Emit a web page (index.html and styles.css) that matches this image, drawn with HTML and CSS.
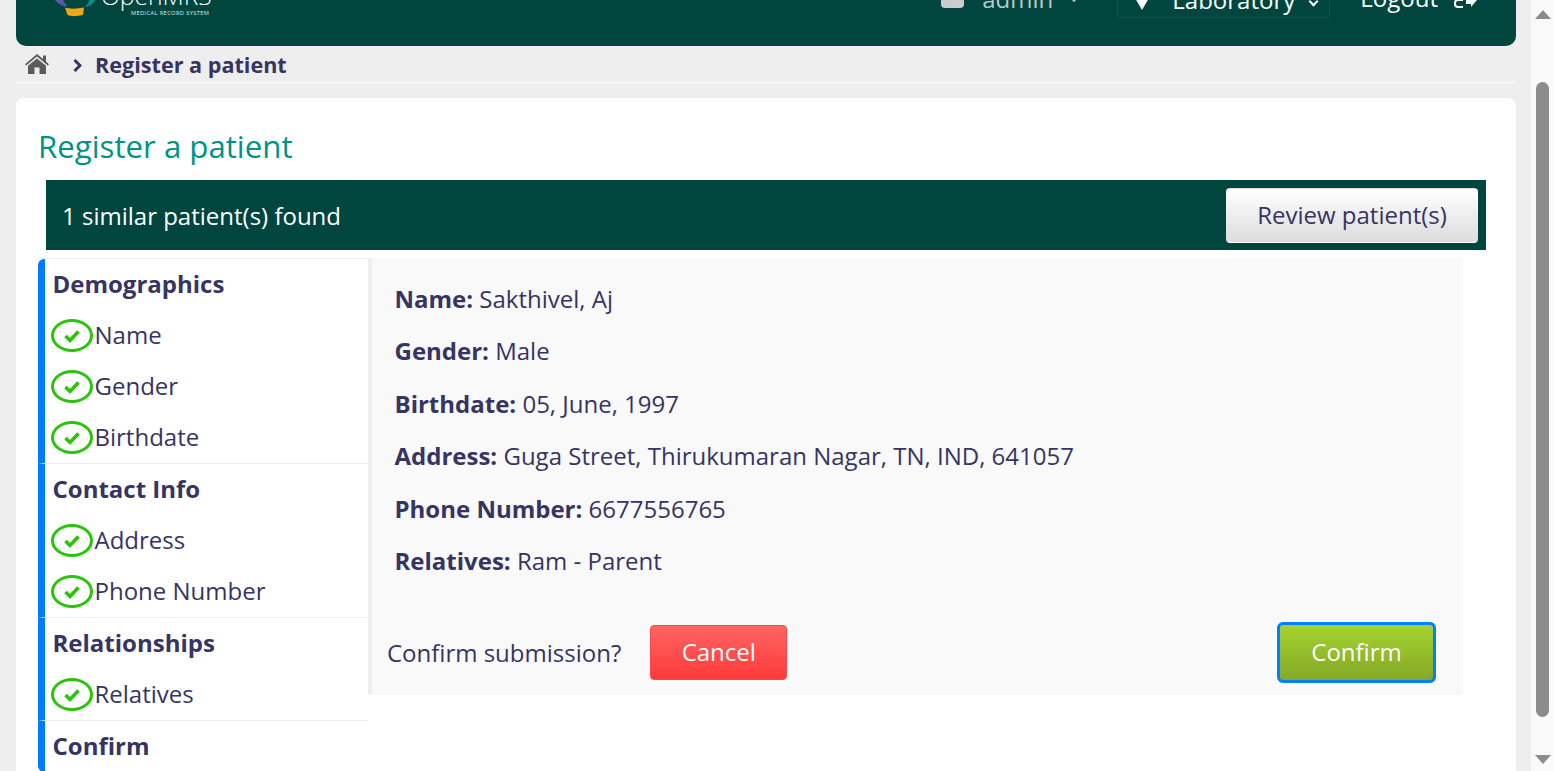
FILE: index.html
```html
<!DOCTYPE html>
<html lang="en">
<head>
<meta charset="utf-8">
<title>Register a patient</title>
<link rel="stylesheet" href="styles.css">
</head>
<body>
<svg class="defs" width="0" height="0" aria-hidden="true">
  <symbol id="ok" viewBox="0 0 42 33">
    <ellipse cx="21" cy="16.5" rx="19.5" ry="15" fill="none" stroke="#2ac40c" stroke-width="3"/>
    <path d="M14.5 17 L19 21.5 L27.5 12.5" fill="none" stroke="#2ac40c" stroke-width="3.6"/>
  </symbol>
</svg>
<div class="page">
  <div class="main">
    <header class="topbar">
      <div class="brand">
        <svg class="logo" viewBox="0 0 40 17" width="40" height="17" aria-hidden="true">
          <path d="M0 0 H8 C9 2 10 4 12 5 L10 6.5 C5 5 2 3 0 0Z" fill="#5b57a6"/>
          <path d="M10 7.5 C14 9 22 9 29 7.5 L28 15 C22 16.5 16 16.5 12.5 15Z" fill="#eea616"/>
          <path d="M30 6.5 C33 4 34 2 34 0 H40 C39 3 36 6 30 7Z" fill="#009384"/>
        </svg>
        <div class="wordmark">
          <span class="brand-name">OpenMRS</span>
          <span class="brand-sub">MEDICAL RECORD SYSTEM</span>
        </div>
      </div>
      <nav class="usernav">
        <span class="nav-user">
          <span class="user-icon"></span>
          <span class="nav-label">admin</span>
          <span class="caret caret-dim"></span>
        </span>
        <span class="nav-location">
          <svg class="pin" viewBox="0 0 14 12" width="14" height="12" aria-hidden="true"><path d="M0 0 H14 L7 12Z" fill="#fff"/></svg>
          <span class="nav-label">Laboratory</span>
          <span class="caret"></span>
        </span>
        <span class="nav-logout">
          <span class="nav-label">Logout</span>
          <svg class="logout-icon" viewBox="0 0 24 12" width="24" height="12" aria-hidden="true"><path d="M9 0 H4 Q1 0 1 3 V4 Q1 7 4 7 H9" fill="none" stroke="#fff" stroke-width="2"/><path d="M13 0 H17 H23 L17 7 V4 H12 V0Z" fill="#fff"/></svg>
        </span>
      </nav>
    </header>
    <div class="crumbs">
      <svg class="home" viewBox="0 0 24 20" width="24" height="20" aria-hidden="true"><path d="M12 0 L18 5 V1.5 H21 V7.6 L24 10.2 L22.8 11.6 L12 2.6 L1.2 11.6 L0 10.2Z M12 4.4 L21 11.8 V20 H14.5 V13.5 H9.5 V20 H3 V11.8Z" fill="#5b5b5b"/></svg>
      <svg class="chev" viewBox="0 0 9 13" width="9" height="13" aria-hidden="true"><path d="M1.5 1 L7 6.5 L1.5 12" fill="none" stroke="#363463" stroke-width="3"/></svg>
      <span class="crumb-text">Register a patient</span>
    </div>
    <section class="card">
      <h1 class="title">Register a patient</h1>
      <div class="similar">
        <span>1 similar patient(s) found</span>
        <button class="btn btn-review" type="button">Review patient(s)</button>
      </div>
      <div class="form">
        <ul class="steps">
          <li class="section">
            <div class="sec-title">Demographics</div>
            <div class="step"><svg class="ok"><use href="#ok"/></svg>Name</div>
            <div class="step"><svg class="ok"><use href="#ok"/></svg>Gender</div>
            <div class="step"><svg class="ok"><use href="#ok"/></svg>Birthdate</div>
          </li>
          <li class="section">
            <div class="sec-title">Contact Info</div>
            <div class="step"><svg class="ok"><use href="#ok"/></svg>Address</div>
            <div class="step"><svg class="ok"><use href="#ok"/></svg>Phone Number</div>
          </li>
          <li class="section">
            <div class="sec-title">Relationships</div>
            <div class="step"><svg class="ok"><use href="#ok"/></svg>Relatives</div>
          </li>
          <li class="section section-last">
            <div class="sec-title">Confirm</div>
          </li>
        </ul>
        <div class="panel">
          <div class="summary">
            <p class="line"><b>Name:</b> Sakthivel, Aj</p>
            <p class="line"><b>Gender:</b> Male</p>
            <p class="line"><b>Birthdate:</b> 05, June, 1997</p>
            <p class="line"><b>Address:</b> Guga Street, Thirukumaran Nagar, TN, IND, 641057</p>
            <p class="line"><b>Phone Number:</b> 6677556765</p>
            <p class="line"><b>Relatives:</b> Ram - Parent</p>
          </div>
          <div class="actions">
            <span class="ask">Confirm submission?</span>
            <button class="btn btn-cancel" type="button">Cancel</button>
            <button class="btn btn-confirm" type="button">Confirm</button>
          </div>
        </div>
      </div>
    </section>
  </div>
  <aside class="scrollbar" aria-hidden="true">
    <span class="arrow-up"></span>
    <span class="thumb"></span>
    <span class="arrow-down"></span>
  </aside>
</div>
</body>
</html>
```
FILE: styles.css
```css
* { box-sizing: border-box; }
html, body { margin: 0; height: 771px; overflow: hidden; }
body {
  font-family: "Open Sans", "Liberation Sans", sans-serif;
  font-size: 24px;
  color: #363463;
  background: #eee;
}
.defs { display: block; height: 0; }
.page { display: flex; height: 771px; }
.main { width: 1531px; padding: 0 15px 0 16px; flex: none; }

.topbar {
  height: 46px;
  background: #00463f;
  border-radius: 0 0 10px 10px;
  display: flex;
  justify-content: space-between;
  align-items: flex-start;
  overflow: hidden;
  color: #fff;
  padding: 0 38px 0 39px;
}
.brand { display: flex; }
.logo { display: block; }
.wordmark { position: relative; width: 120px; margin-left: 6px; }
.brand-name { position: absolute; left: 0; top: -16px; font-size: 24.6px; line-height: 24px; font-weight: 300; white-space: nowrap; }
.brand-sub { position: absolute; left: 30px; top: 9px; font-size: 5.75px; line-height: 8px; letter-spacing: .35px; white-space: nowrap; color: #dfeeea; }
.usernav { display: flex; align-items: flex-start; font-size: 24px; }
.nav-label { display: block; line-height: 30px; white-space: nowrap; }
.nav-user { display: flex; align-items: flex-start; margin-top: -16px; margin-right: 40px; color: #b9c9c6; }
.user-icon { width: 23px; height: 13px; margin: 11px 18px 0 0; background: #ccc; border-radius: 0 0 4px 4px; }
.nav-location {
  display: flex; align-items: flex-start;
  height: 34px; width: 213px; margin-top: -16px; margin-right: 30px; padding-left: 17px;
  border: 1px solid #0a5a50; border-radius: 4px;
}
.pin { margin: 13px 23px 0 0; flex: none; }
.nav-logout { display: flex; align-items: flex-start; margin-top: -17px; }
.logout-icon { margin: 17px 0 0 16px; flex: none; }
.caret { width: 7px; height: 7px; border-right: 2px solid #fff; border-bottom: 2px solid #fff; transform: rotate(45deg); margin: 13px 0 0 15px; flex: none; }
.caret-dim { border-color: #9fb3af; margin-left: 18px; margin-top: 11px; width: 6px; height: 6px; }

.crumbs {
  height: 37px;
  display: flex;
  align-items: center;
  padding-left: 9px;
  border-bottom: 1px solid #fff;
}
.home { margin-top: -1px; }
.chev { margin: 2px 0 0 24px; }
.crumb-text { font-size: 21.6px; font-weight: 700; margin-left: 13px; }

.card {
  margin-top: 15px;
  height: 700px;
  background: #fff;
  border-radius: 8px 8px 0 0;
  padding: 27px 30px 0 22px;
}
.title { margin: 0 0 13px; font-size: 31.2px; line-height: 42px; font-weight: 400; color: #009384; }
.similar {
  margin: 0 0 8px 8px;
  height: 70px;
  width: 1440px;
  background: #00463f;
  color: #fff;
  display: flex;
  align-items: center;
  justify-content: space-between;
  padding: 0 8px 0 16px;
}
.btn { font-family: inherit; font-size: 24px; line-height: 30px; border-radius: 4px; border: 1px solid transparent; cursor: pointer; }
.btn-review { width: 252px; height: 55px; margin-top: 1px; background: linear-gradient(#fff, #dcdcdc); color: #363463; padding: 0 0 2px; }
.form { display: flex; align-items: flex-start; }
.steps { list-style: none; margin: 0; padding: 0; width: 330px; border-top: 1px solid #eee; }
.section { border-left: 7px solid #007bff; border-bottom: 1px solid #eee; }
.section:first-child { border-top-left-radius: 6px; }
.section-last { border-bottom: 0; border-bottom-left-radius: 6px; height: 51px; }
.sec-title { height: 51px; display: flex; align-items: center; padding: 0 0 2px 7.5px; font-weight: 700; }
.step { height: 51px; display: flex; align-items: center; padding: 0 0 2px 6px; }
.ok { width: 42px; height: 33px; margin: 2px 1.5px 0 0; flex: none; }
.panel {
  width: 1095px;
  height: 437px;
  background: #f9f9f9;
  border-left: 4px solid #eee;
  padding: 15px 27px 0 15px;
}
.summary { padding-left: 7.5px; }
.line { margin: 0; height: 52.4px; line-height: 52.4px; white-space: nowrap; }
.actions { display: flex; align-items: center; margin-top: 34.6px; }
.ask { margin-right: 29px; }
.btn-cancel { width: 137px; height: 55px; padding: 0; color: #fff; border-color: #f54a4a; background: linear-gradient(#ff6464, #ff3a3a); }
.btn-confirm {
  width: 159px; height: 61px; padding: 0; margin-left: auto; color: #fff;
  border: 3px solid #0080ff; border-radius: 6px;
  background: linear-gradient(#a5d32f, #84a828);
}

.scrollbar { width: 23px; flex: none; background: #fafafa; position: relative; }
.thumb { position: absolute; left: 5px; top: 82px; width: 13px; height: 635px; border-radius: 7px; background: #8c8c8c; }
.arrow-up, .arrow-down { position: absolute; left: 4px; width: 0; height: 0; border-left: 8px solid transparent; border-right: 8px solid transparent; }
.arrow-up { top: 10px; border-bottom: 9px solid #8c8c8c; }
.arrow-down { top: 755px; border-top: 9px solid #8c8c8c; }
```
